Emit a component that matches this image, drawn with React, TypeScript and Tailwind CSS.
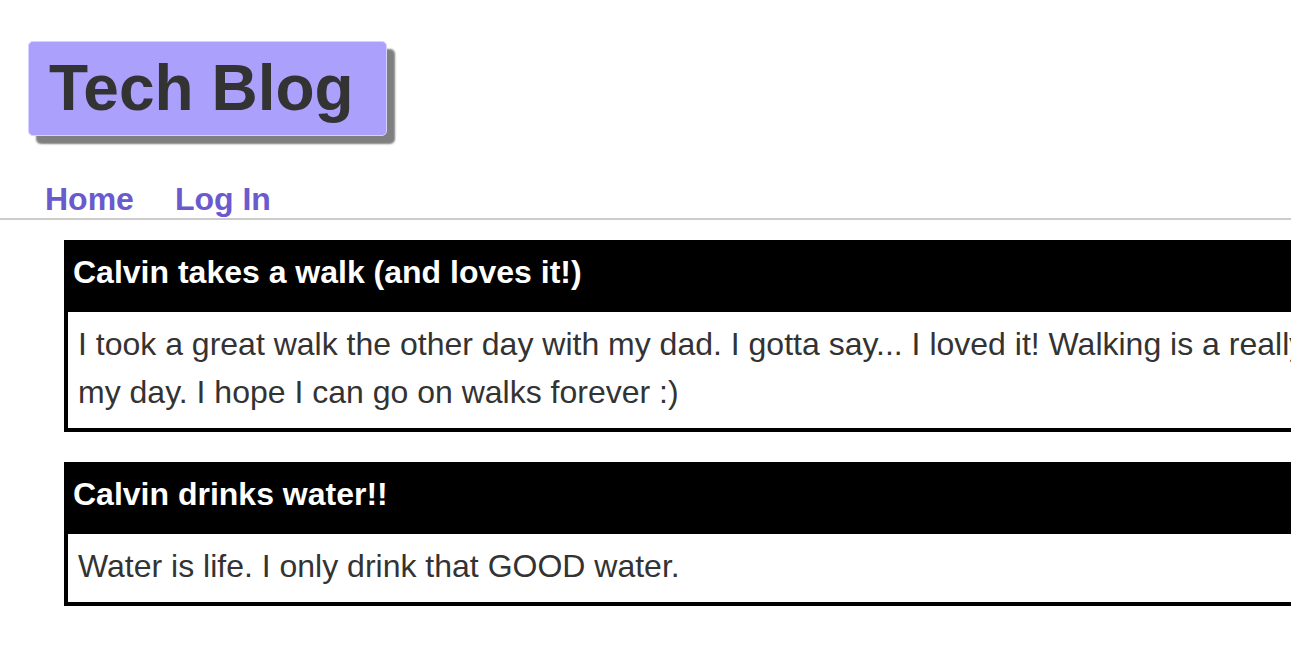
const posts = [
  {
    id: 1,
    title: 'Calvin takes a walk (and loves it!)',
    body: 'I took a great walk the other day with my dad. I gotta say... I loved it! Walking is a really great way to start my day. I hope I can go on walks forever :)',
  },
  {
    id: 2,
    title: 'Calvin drinks water!!',
    body: 'Water is life. I only drink that GOOD water.',
  },
];

export default function App() {
  return (
    <div className="w-full min-h-screen overflow-hidden bg-white font-['Liberation_Sans',Arial,sans-serif]">
      {/* Site title */}
      <header className="pt-[41px] pl-[28px]">
        <div className="w-[359px] h-[95px] rounded-[5px] border border-[#d6d2ff] bg-[#aba0fb] shadow-[8px_8px_2px_#7f7f7f] pl-[20px] pt-[14px]">
          <h1 className="text-[64px] leading-[64px] font-bold text-[#333333] whitespace-nowrap">
            Tech Blog
          </h1>
        </div>
      </header>

      {/* Nav */}
      <nav className="mt-[45px] pl-[45px] pb-[1px] border-b-2 border-[#cccccc] flex gap-[41px]">
        <a href="#" className="text-[32px] leading-[36px] font-bold text-[#6a5acd]">
          Home
        </a>
        <a href="#" className="text-[32px] leading-[36px] font-bold text-[#6a5acd]">
          Log In
        </a>
      </nav>

      {/* Posts */}
      <main className="pt-[20px] pl-[64px] flex flex-col gap-[30px]">
        {posts.map((post) => (
          <article key={post.id} className="w-[1528px] shrink-0 border-4 border-black">
            <h2 className="h-[68px] bg-black pt-[10px] pl-[5px] text-[32px] leading-[36px] font-bold text-white">
              {post.title}
            </h2>
            <p className="pt-[8px] pb-[12px] pl-[10px] pr-[10px] text-[32px] leading-[48px] text-[#333333]">
              {post.body}
            </p>
          </article>
        ))}
      </main>
    </div>
  );
}
